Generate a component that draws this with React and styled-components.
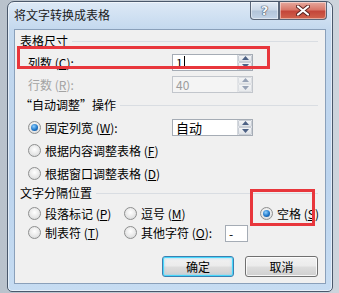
import React from 'react'
import styled, { createGlobalStyle } from 'styled-components'

const GlobalStyle = createGlobalStyle`
	body {
		margin: 0;
		background: linear-gradient(90deg, #b9c2cc, #cdd4dc);
		font-family: "Noto Sans CJK SC", "Noto Sans", sans-serif;
		font-size: 12px;
		color: #000;
	}
`;

const Window = styled.div`
	box-sizing: border-box;
	margin: 1px 0 0 7px;
	width: 326px;
	height: 291px;
	border: 1px solid #4a586b;
	border-radius: 7px 7px 5px 5px;
	background: linear-gradient(180deg, #dde9f6 0px, #c3d8ee 28px, #bcd4ee 60%, #c6dcf2 100%);
	padding: 0 6px 7px 6px;
	display: flex;
	flex-direction: column;
	box-shadow: inset 0 0 0 1px rgba(255, 255, 255, 0.55);
`;

const TitleBar = styled.div`
	height: 27px;
	display: flex;
	align-items: flex-start;
	flex-shrink: 0;
`;

const Title = styled.div`
	flex: 1;
	padding-top: 4px;
	line-height: 18px;
	font-size: 12px;
	color: #1b1b1b;
`;

const CaptionButton = styled.div`
	box-sizing: border-box;
	height: 18px;
	width: ${props => props.$w}px;
	display: flex;
	align-items: center;
	justify-content: center;
	border: 1px solid #5a6678;
	border-top: none;
	background: ${props => props.$close
		? 'linear-gradient(180deg, #e6a99e 0%, #d9786a 45%, #c4463a 55%, #d0634c 100%)'
		: 'linear-gradient(180deg, #e3ebf4 0%, #ccd9e8 45%, #b3c5da 55%, #c2d3e6 100%)'};
	border-radius: ${props => props.$close ? '0 0 4px 0' : '0 0 0 4px'};
	margin-right: ${props => props.$close ? '-1px' : '0'};
	box-shadow: inset 0 0 0 1px rgba(255, 255, 255, 0.45);
`;

const HelpGlyph = styled.span`
	font-family: "DejaVu Sans", sans-serif;
	font-weight: bold;
	font-size: 13px;
	line-height: 13px;
	color: #f4f7fb;
	text-shadow: 0 0 1px #3e4a5c, 0 0 1px #3e4a5c, 0 0 1px #3e4a5c;
`;

const Client = styled.div`
	flex: 1;
	border: 1px solid #8aa0ba;
	background: #f0f0f0;
	padding: 3px 7px 0 5px;
	display: flex;
	flex-direction: column;
`;

const GroupHeader = styled.div`
	display: flex;
	align-items: center;
	height: 15px;
	gap: 4px;
	margin-top: ${props => props.$mt || 0}px;
	&::after {
		content: '';
		flex: 1;
		height: 1px;
		background: #d9dde2;
		margin-top: 1px;
	}
`;

const Mark = styled.div`
	position: relative;
	&::after {
		content: '';
		position: absolute;
		top: ${props => props.$top}px;
		left: ${props => props.$left}px;
		width: ${props => props.$w}px;
		height: ${props => props.$h}px;
		box-sizing: border-box;
		border: 3px solid #e8363c;
		pointer-events: none;
	}
`;

const FieldRow = styled.div`
	display: grid;
	grid-template-columns: 144px 81px;
	align-items: center;
	height: 18px;
	padding-left: 8px;
	margin-top: ${props => props.$mt || 0}px;
	color: ${props => props.$disabled ? '#a3a3a3' : '#000'};
`;

const Key = styled.span`
	text-decoration: underline;
	text-underline-offset: 1px;
`;

const SpinBox = styled.div`
	box-sizing: border-box;
	height: 17px;
	display: flex;
	border: 1px solid ${props => props.$disabled ? '#c2c6cc' : '#a5acb5'};
	background: ${props => props.$disabled ? '#f4f4f4' : '#fff'};
`;

const SpinText = styled.div`
	flex: 1;
	padding-left: 3px;
	line-height: 15px;
	font-size: ${props => props.$size || 12}px;
	color: ${props => props.$disabled ? '#9c9c9c' : '#000'};
	display: flex;
	align-items: center;
`;

const Caret = styled.span`
	display: inline-block;
	width: 1px;
	height: 13px;
	background: #000;
	margin-left: 1px;
`;

const SpinButtons = styled.div`
	width: 14px;
	display: flex;
	flex-direction: column;
	border-left: 1px solid #d4d8dd;
	opacity: ${props => props.$disabled ? 0.55 : 1};
`;

const SpinHalf = styled.div`
	flex: 1;
	display: flex;
	align-items: center;
	justify-content: center;
	background: linear-gradient(180deg, #f4f5f7, #dfe3e8);
	border: 1px solid #c9ced6;
	border-radius: 1px;
	margin: 0 0 ${props => props.$down ? '0' : '0'} 0;
`;

const RadioRow = styled.div`
	display: flex;
	align-items: center;
	height: 18px;
	padding-left: 8px;
	margin-top: ${props => props.$mt || 0}px;
`;

const RadioItem = styled.div`
	display: flex;
	align-items: center;
	gap: 4px;
	white-space: nowrap;
	width: ${props => props.$w ? props.$w + 'px' : 'auto'};
`;

const RadioCircle = styled.span`
	box-sizing: border-box;
	width: 13px;
	height: 13px;
	border-radius: 50%;
	border: 1px solid #8e8f8f;
	background: radial-gradient(circle at 50% 40%, #ffffff 0%, #e8e8e8 55%, #cfd2d5 100%);
	display: flex;
	align-items: center;
	justify-content: center;
	flex-shrink: 0;
	&::after {
		content: '';
		display: ${props => props.$checked ? 'block' : 'none'};
		width: 7px;
		height: 7px;
		border-radius: 50%;
		background: radial-gradient(circle at 40% 35%, #8fd0ff 0%, #1f77c9 55%, #0d3f80 100%);
	}
`;

const RadioSpacer = styled.div`
	flex: 1;
`;

const SepGrid = styled.div`
	display: grid;
	grid-template-columns: 96px 101px 35px auto;
	grid-auto-rows: 18px;
	row-gap: 1px;
	align-items: center;
	padding-left: 8px;
	margin-top: 4px;
`;

const SmallInput = styled.div`
	box-sizing: border-box;
	width: 23px;
	height: 17px;
	border: 1px solid #a5acb5;
	background: #fff;
	padding-left: 3px;
	line-height: 15px;
	margin-top: 3px;
`;

const ButtonBar = styled.div`
	display: flex;
	justify-content: flex-end;
	gap: 11px;
	margin-top: 15px;
`;

const Button = styled.div`
	box-sizing: border-box;
	width: ${props => props.$w}px;
	height: 21px;
	border-radius: 3px;
	display: flex;
	align-items: center;
	justify-content: center;
	border: 1px solid ${props => props.$default ? '#3c7fb1' : '#707070'};
	background: linear-gradient(180deg, #f2f2f2 0%, #ebebeb 48%, #dddddd 52%, #cfcfcf 100%);
	box-shadow: ${props => props.$default
		? 'inset 0 0 0 1px #48d8fb, inset 0 0 2px 2px rgba(120, 210, 250, 0.35)'
		: 'inset 0 0 0 1px rgba(255, 255, 255, 0.8)'};
	font-size: 12px;
`;

const SpinArrows = ({ disabled }) => (
	<SpinButtons $disabled={disabled}>
		<SpinHalf>
			<svg width="7" height="4" viewBox="0 0 7 4"><path d="M0 4 L3.5 0 L7 4 Z" fill="#4d6185" /></svg>
		</SpinHalf>
		<SpinHalf $down>
			<svg width="7" height="4" viewBox="0 0 7 4"><path d="M0 0 L3.5 4 L7 0 Z" fill="#4d6185" /></svg>
		</SpinHalf>
	</SpinButtons>
);

const Radio = ({ checked, label, w }) => (
	<RadioItem $w={w}>
		<RadioCircle $checked={checked} />
		<span>{label}</span>
	</RadioItem>
);

const App = () => {
	return (
		<>
			<GlobalStyle />
			<Window>
				<TitleBar>
					<Title>将文字转换成表格</Title>
					<CaptionButton $w={29}>
						<HelpGlyph>?</HelpGlyph>
					</CaptionButton>
					<CaptionButton $w={48} $close>
						<svg width="14" height="11" viewBox="0 0 14 11">
							<path d="M2 1.5 L12 9.5 M12 1.5 L2 9.5" stroke="#5b2320" strokeWidth="4" strokeLinecap="round" />
							<path d="M2 1.5 L12 9.5 M12 1.5 L2 9.5" stroke="#ffffff" strokeWidth="2.2" strokeLinecap="round" />
						</svg>
					</CaptionButton>
				</TitleBar>
				<Client>
					<GroupHeader>表格尺寸</GroupHeader>
					<Mark $top={-2} $left={-3} $w={253} $h={23}>
						<FieldRow $mt={5}>
							<span>列数 (<Key>C</Key>):</span>
							<SpinBox>
								<SpinText>1<Caret /></SpinText>
								<SpinArrows />
							</SpinBox>
						</FieldRow>
					</Mark>
					<FieldRow $mt={4} $disabled>
						<span>行数 (<Key>R</Key>):</span>
						<SpinBox $disabled>
							<SpinText $disabled>40</SpinText>
							<SpinArrows disabled />
						</SpinBox>
					</FieldRow>

					<GroupHeader $mt={4}>“自动调整”操作</GroupHeader>
					<RadioRow $mt={6}>
						<Radio checked w={144} label={<>固定列宽 (<Key>W</Key>):</>} />
						<SpinBox style={{ width: 81 }}>
							<SpinText $size={13}>自动</SpinText>
							<SpinArrows />
						</SpinBox>
						<RadioSpacer />
					</RadioRow>
					<RadioRow $mt={5}>
						<Radio label={<>根据内容调整表格 (<Key>F</Key>)</>} />
					</RadioRow>
					<RadioRow $mt={5}>
						<Radio label={<>根据窗口调整表格 (<Key>D</Key>)</>} />
					</RadioRow>

					<GroupHeader $mt={3}>文字分隔位置</GroupHeader>
					<SepGrid>
						<Radio label={<>段落标记 (<Key>P</Key>)</>} />
						<Radio label={<>逗号 (<Key>M</Key>)</>} />
						<span />
						<Mark $top={-16} $left={-10} $w={65} $h={37}>
							<Radio checked label={<>空格 (<Key>S</Key>)</>} />
						</Mark>
						<Radio label={<>制表符 (<Key>T</Key>)</>} />
						<Radio label={<>其他字符 (<Key>O</Key>):</>} />
						<SmallInput>-</SmallInput>
						<span />
					</SepGrid>

					<ButtonBar>
						<Button $w={72} $default>确定</Button>
						<Button $w={73}>取消</Button>
					</ButtonBar>
				</Client>
			</Window>
		</>
	)
}

export default App
